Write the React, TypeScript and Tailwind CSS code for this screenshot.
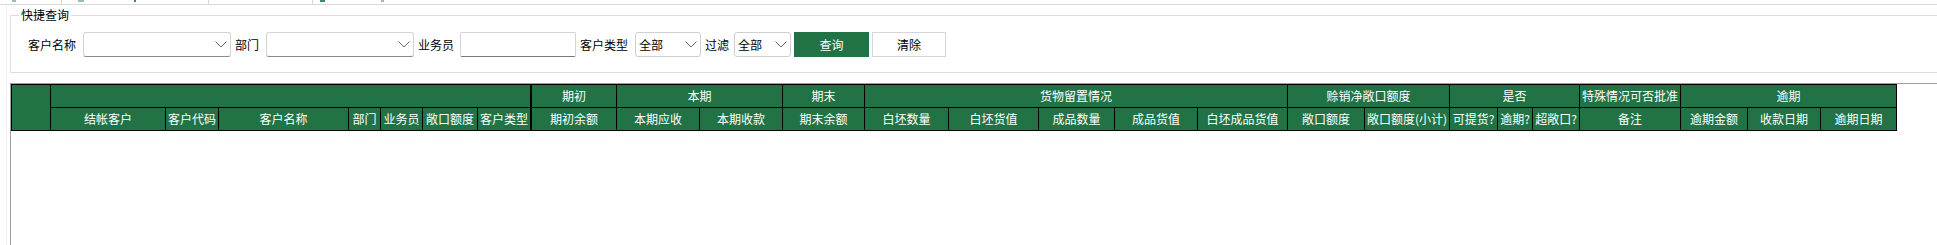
import React from 'react';

const topRow: { label: string; span: string; extra?: string }[] = [
  { label: '', span: 'col-span-7', extra: 'border-r border-black' },
  { label: '期初', span: 'col-span-1' },
  { label: '本期', span: 'col-span-2' },
  { label: '期末', span: 'col-span-1' },
  { label: '货物留置情况', span: 'col-span-5' },
  { label: '赊销净敞口额度', span: 'col-span-2' },
  { label: '是否', span: 'col-span-3' },
  { label: '特殊情况可否批准', span: 'col-span-1' },
  { label: '逾期', span: 'col-span-3' },
];

const bottomRow = [
  '结帐客户', '客户代码', '客户名称', '部门', '业务员', '敞口额度', '客户类型',
  '期初余额', '本期应收', '本期收款', '期末余额',
  '白坯数量', '白坯货值', '成品数量', '成品货值', '白坯成品货值',
  '敞口额度', '敞口额度(小计)',
  '可提货?', '逾期?', '超敞口?',
  '备注',
  '逾期金额', '收款日期', '逾期日期',
];

function Chevron() {
  return (
    <svg width="12" height="7" viewBox="0 0 12 7" className="shrink-0">
      <polyline points="0.5,0.5 6,6 11.5,0.5" fill="none" stroke="#6b6b6b" strokeWidth="1" />
    </svg>
  );
}

function Combo({ className, value }: { className: string; value?: string }) {
  return (
    <div className={`h-[25px] flex items-center justify-between pl-[3px] pr-[3px] bg-white border rounded-[3px] ${className}`}>
      <span className="text-[12px] leading-[16px] text-black">{value}</span>
      <Chevron />
    </div>
  );
}

function Label({ children, className }: { children: React.ReactNode; className: string }) {
  return <span className={`text-[12px] leading-[16px] text-black whitespace-nowrap ${className}`}>{children}</span>;
}

export default function App() {
  const cell = 'bg-[#217346] text-white text-[12px] leading-[22px] text-center whitespace-nowrap';

  return (
    <div className="w-[1937px] h-[245px] overflow-hidden bg-white flex flex-col font-['Noto_Sans_CJK_SC',sans-serif]">
      {/* tab strip, cut off at top */}
      <div className="h-[5px] shrink-0 flex border-b border-[#dadada]">
        <div className="w-[62px] border-r border-[#d6d6d6] flex gap-[60px] pl-[12px]">
          <span className="w-[4px] h-[2px] bg-[#9bbfa8]" />
        </div>
        <div className="w-[147px] border-r border-[#d6d6d6] flex pl-[16px] gap-[50px]">
          <span className="w-[6px] h-[2px] bg-[#9bbfa8]" />
          <span className="w-[2px] h-[2px] bg-[#3d8a5c]" />
        </div>
        <div className="w-[104px] border-r border-[#d6d6d6]" />
        <div className="w-[200px] flex pl-[7px] gap-[56px]">
          <span className="w-[5px] h-[2px] bg-[#3d8a5c]" />
          <span className="w-[3px] h-[2px] bg-[#9bbfa8]" />
        </div>
      </div>

      <div className="ml-[6px] flex-1 flex flex-col border-l border-[#f0f0f0]">
        <fieldset className="ml-[3px] mt-[2px] h-[66px] shrink-0 border border-r-0 border-[#dcdcdc] pl-[8px] pt-[9px]">
          <legend className="px-[2px] text-[12px] leading-[16px] text-black">快捷查询</legend>
          <div className="flex items-center h-[25px] pl-[9px]">
            <Label className="">客户名称</Label>
            <Combo className="ml-[7px] w-[148px] border-[#d4d4d4] border-b-[#8a8a8a]" />
            <Label className="ml-[4px]">部门</Label>
            <Combo className="ml-[7px] w-[148px] border-[#d4d4d4] border-b-[#8a8a8a]" />
            <Label className="ml-[4px]">业务员</Label>
            <div className="ml-[6px] w-[116px] h-[25px] bg-white border border-[#d4d4d4] border-b-[#7a7a7a] rounded-[2px]" />
            <Label className="ml-[4px]">客户类型</Label>
            <Combo className="ml-[7px] w-[66px] border-[#cfcfcf]" value="全部" />
            <Label className="ml-[4px]">过滤</Label>
            <Combo className="ml-[5px] w-[57px] border-[#cfcfcf]" value="全部" />
            <button className="ml-[3px] w-[75px] h-[25px] bg-[#217346] text-white text-[12px] leading-[16px]">查询</button>
            <button className="ml-[3px] w-[74px] h-[25px] bg-white border border-[#d6d6d6] text-black text-[12px] leading-[16px]">清除</button>
          </div>
        </fieldset>

        <div className="ml-[3px] mt-[10px] flex-1 border-t border-l border-[#a0a0a0]">
          <div className="grid w-max grid-cols-[38px_114px_52px_129px_31px_41px_54px_53px_84px_82px_82px_81px_83px_89px_75px_82px_89px_76px_84px_47px_34px_46px_100px_66px_72px_75px] grid-rows-[22px_22px] gap-px bg-black border border-black">
            <div className={`${cell} row-span-2`} />
            {topRow.map((g, i) => (
              <div key={i} className={`${cell} ${g.span} ${g.extra ?? ''}`}>{g.label}</div>
            ))}
            {bottomRow.map((label, i) => (
              <div key={i} className={`${cell} ${label === '客户类型' ? 'border-r border-black' : ''}`}>{label}</div>
            ))}
          </div>
        </div>
      </div>
    </div>
  );
}
